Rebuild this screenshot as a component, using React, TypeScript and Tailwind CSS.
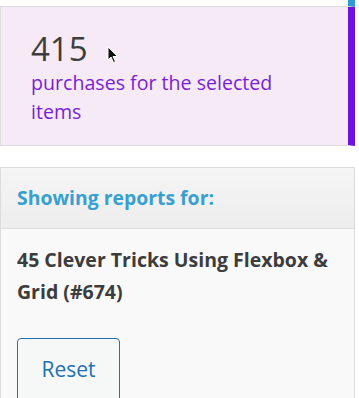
export default function App() {
  return (
    <div className="relative w-[359px] h-[398px] overflow-hidden bg-white font-['Open_Sans',sans-serif]">
      <div className="w-[355px]">
        {/* tail of the card above */}
        <div className="h-[7px] bg-white border-b border-[#dcdcdc] border-r-[7px] border-r-[#2d9ad6]" />

        {/* stat card */}
        <div className="bg-[#f6eaf6] border-l border-l-[#dedede] border-b border-b-[#dcdcdc] border-r-[7px] border-r-[#7110e3] pl-[30px] pt-[22px] pb-[19px]">
          <div className="text-[33px] leading-[39px] text-[#3d3d3d]">415</div>
          <div className="max-w-[272px] text-[19.6px] leading-[29px] text-[#7a1fd4]">
            purchases for the selected items
          </div>
        </div>

        {/* filter panel */}
        <div className="mt-[21px] border border-[#dcdcdc] bg-[#f9f9f9]">
          <div className="bg-gradient-to-b from-[#f5f5f5] to-[#ededed] border-b border-[#dcdcdc] px-4 py-[17px]">
            <h3 className="text-[19.4px] leading-[26px] font-bold text-[#37a0d0]">Showing reports for:</h3>
          </div>
          <div className="px-4 pt-[15px]">
            <p className="text-[19.5px] leading-[32px] font-bold text-[#3c3c3c] pr-2">
              45 Clever Tricks Using Flexbox &amp; Grid (#674)
            </p>
            <button className="mt-[30px] h-[64px] w-[103px] rounded border border-[#2271b1] bg-[#f6f7f7] text-[21px] text-[#2271b1]">
              Reset
            </button>
          </div>
        </div>
      </div>

      {/* mouse pointer */}
      <svg className="absolute left-[107px] top-[46px]" width="12" height="18" viewBox="0 0 12 18">
        <path d="M1 1 L1 14 L4 11 L6.5 16.5 L8.5 15.5 L6 10.5 L10.5 10.5 Z" fill="#111" stroke="#fff" strokeWidth="1" />
      </svg>
    </div>
  );
}
